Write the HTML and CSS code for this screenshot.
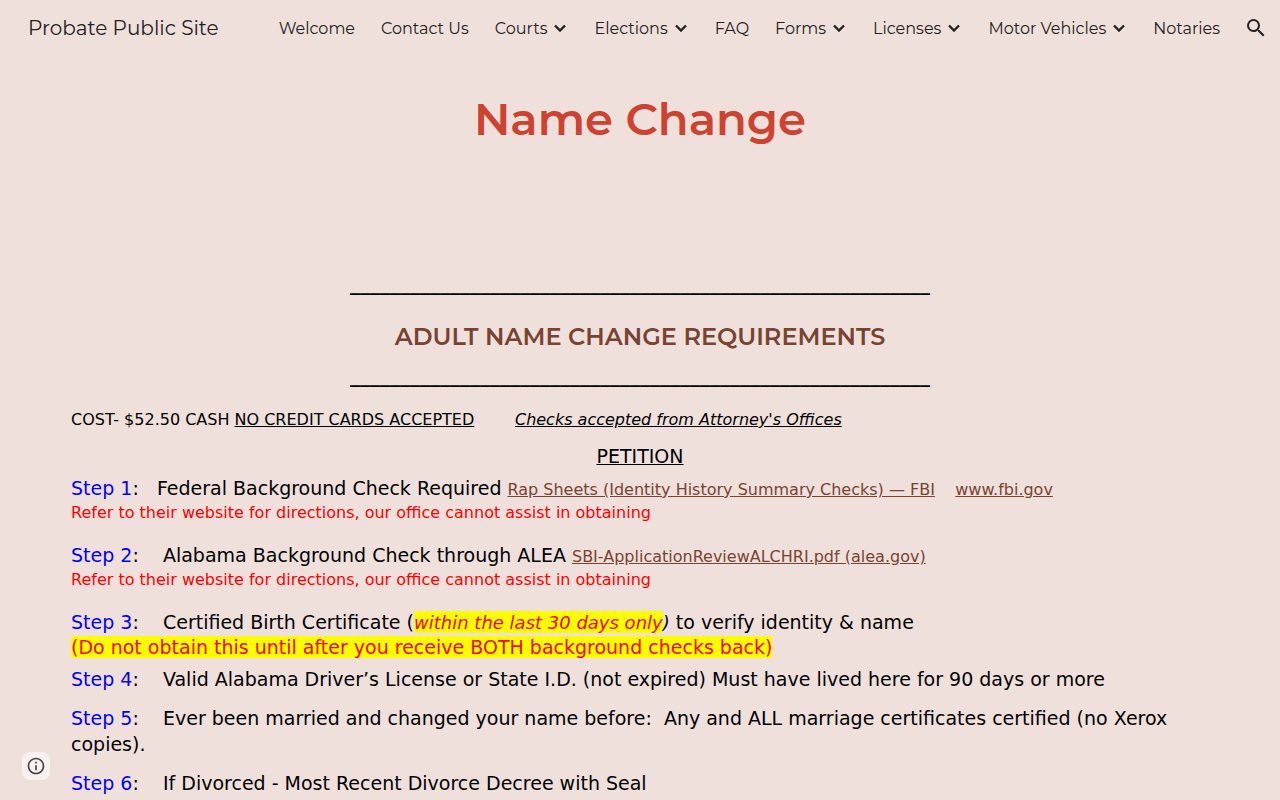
FILE: index.html
```html
<!DOCTYPE html>
<html lang="en">
<head>
	<meta charset="UTF-8">
	<meta name="viewport" content="width=device-width, initial-scale=1">
	<title>Probate Public Site - Name Change</title>
	<link rel="stylesheet" href="styles.css">
</head>
<body>
	<header class="header">
		<a class="site-name" href="#">Probate Public Site</a>
		<nav class="nav">
			<a class="nav-link" href="#">Welcome</a>
			<a class="nav-link" href="#">Contact Us</a>
			<a class="nav-link" href="#">Courts <svg class="arrow" viewBox="0 0 12 8"><path d="M1 1.5l5 5 5-5"/></svg></a>
			<a class="nav-link" href="#">Elections <svg class="arrow" viewBox="0 0 12 8"><path d="M1 1.5l5 5 5-5"/></svg></a>
			<a class="nav-link" href="#">FAQ</a>
			<a class="nav-link" href="#">Forms <svg class="arrow" viewBox="0 0 12 8"><path d="M1 1.5l5 5 5-5"/></svg></a>
			<a class="nav-link" href="#">Licenses <svg class="arrow" viewBox="0 0 12 8"><path d="M1 1.5l5 5 5-5"/></svg></a>
			<a class="nav-link" href="#">Motor Vehicles <svg class="arrow" viewBox="0 0 12 8"><path d="M1 1.5l5 5 5-5"/></svg></a>
			<a class="nav-link" href="#">Notaries</a>
		</nav>
		<button class="search" type="button" aria-label="Open search bar">
			<svg width="24" height="24" viewBox="0 0 24 24"><path d="M15.5 14h-.79l-.28-.27A6.471 6.471 0 0 0 16 9.5 6.5 6.5 0 1 0 9.5 16c1.61 0 3.09-.59 4.23-1.57l.27.28v.79l5 4.99L20.49 19l-4.99-5zm-6 0C7.01 14 5 11.99 5 9.5S7.01 5 9.5 5 14 7.01 14 9.5 11.99 14 9.5 14z"/></svg>
		</button>
	</header>
	<main class="content">
		<h1 class="title">Name Change</h1>
		<p class="rule">__________________________________________________________</p>
		<h2 class="subtitle">ADULT NAME CHANGE REQUIREMENTS</h2>
		<p class="rule">__________________________________________________________</p>
		<p class="cost">COST- $52.50 CASH <u>NO CREDIT CARDS ACCEPTED</u>&nbsp; &nbsp; &nbsp; &nbsp; <u><em>Checks accepted from Attorney's Offices</em></u></p>
		<h3 class="petition">PETITION</h3>
		<div class="steps">
			<p class="step spaced"><span class="step-no">Step 1</span>:&nbsp; &nbsp;Federal Background Check Required <span class="links"><a href="#">Rap Sheets (Identity History Summary Checks) — FBI</a>&nbsp; &nbsp; <a href="#">www.fbi.gov</a></span>
				<span class="note">Refer to their website for directions, our office cannot assist in obtaining</span></p>
			<p class="step spaced"><span class="step-no">Step 2</span>:&nbsp; &nbsp; Alabama Background Check through ALEA <span class="links"><a href="#">SBI-ApplicationReviewALCHRI.pdf (alea.gov)</a></span>
				<span class="note">Refer to their website for directions, our office cannot assist in obtaining</span></p>
			<p class="step tight"><span class="step-no">Step 3</span>:&nbsp; &nbsp; Certified Birth Certificate (<mark><em>within the last 30 days only</em></mark><em>)</em> to verify identity &amp; name<br>
				<mark>(Do not obtain this until after you receive BOTH background checks back)</mark></p>
			<p class="step"><span class="step-no">Step 4</span>:&nbsp; &nbsp; Valid Alabama Driver’s License or State I.D. (not expired) Must have lived here for 90 days or more</p>
			<p class="step"><span class="step-no">Step 5</span>:&nbsp; &nbsp; Ever been married and changed your name before:&nbsp; Any and ALL marriage certificates certified (no Xerox copies).</p>
			<p class="step"><span class="step-no">Step 6</span>:&nbsp; &nbsp; If Divorced - Most Recent Divorce Decree with Seal</p>
		</div>
	</main>
	<button class="info" type="button" aria-label="Site information">
		<svg width="20" height="20" viewBox="0 0 24 24"><path d="M11 17h2v-6h-2v6zm1-15C6.48 2 2 6.48 2 12s4.48 10 10 10 10-4.48 10-10S17.52 2 12 2zm0 18c-4.41 0-8-3.59-8-8s3.59-8 8-8 8 3.59 8 8-3.59 8-8 8zM11 9h2V7h-2v2z"/></svg>
	</button>
</body>
</html>
```
FILE: styles.css
```css
* {
	box-sizing: border-box;
}
body {
	margin: 0;
	background-color: #f0e0dc;
	color: #000;
	font-family: "DejaVu Sans", sans-serif;
	font-size: 16px;
}
h1, h2, h3, p {
	margin: 0;
}
.header {
	display: flex;
	align-items: center;
	height: 56px;
	padding: 0 12px 0 28px;
	font-family: Montserrat, Inter, sans-serif;
	font-weight: 400;
}
.site-name {
	color: #212121;
	font-size: 20px;
	text-decoration: none;
	white-space: nowrap;
}
.nav {
	display: flex;
	gap: 26px;
	margin-left: auto;
}
.nav-link {
	display: flex;
	align-items: center;
	gap: 7px;
	color: #212121;
	font-size: 16px;
	text-decoration: none;
	white-space: nowrap;
}
.arrow {
	width: 12px;
	height: 8px;
	margin-right: 2px;
	fill: none;
	stroke: #212121;
	stroke-width: 2.4;
}
.search {
	width: 24px;
	height: 24px;
	margin-left: 24px;
	padding: 0;
	border: none;
	background: none;
	fill: #212121;
}
.content {
	padding: 31px 71px;
}
.title {
	color: #cc4331;
	font-family: Montserrat, Inter, sans-serif;
	font-size: 45px;
	font-weight: 600;
	line-height: 64px;
	text-align: center;
	margin-bottom: 123px;
}
.rule {
	font-family: Montserrat, Inter, sans-serif;
	font-size: 20px;
	font-weight: 700;
	line-height: 24px;
	text-align: center;
}
.subtitle {
	color: #774433;
	font-family: Montserrat, Inter, sans-serif;
	font-size: 24px;
	font-weight: 600;
	line-height: 32px;
	text-align: center;
	margin: 23px 0 13px;
}
.cost {
	line-height: 24px;
	margin-top: 18px;
}
.petition {
	font-size: 19px;
	font-weight: normal;
	line-height: 26px;
	text-align: center;
	text-decoration: underline;
	margin: 11px 0 7px;
}
.step {
	font-size: 19px;
	line-height: 26px;
	margin-bottom: 13px;
}
.step.spaced {
	line-height: 24px;
	margin-bottom: 17px;
}
.step.tight {
	line-height: 24px;
	margin-bottom: 7px;
}
.step em {
	font-size: 18px;
}
.step-no {
	color: #0000ff;
}
.links {
	font-size: 16px;
	line-height: 16px;
}
.links a {
	color: #774433;
}
.note {
	display: block;
	color: #ff0000;
	font-size: 16px;
	line-height: 26px;
}
mark {
	background-color: #ffff00;
	color: #ff0000;
}
.info {
	position: fixed;
	left: 22px;
	bottom: 20px;
	display: flex;
	align-items: center;
	justify-content: center;
	width: 28px;
	height: 28px;
	padding: 0;
	border: none;
	border-radius: 8px;
	background-color: #f8f1ef;
	fill: #444;
}
```
